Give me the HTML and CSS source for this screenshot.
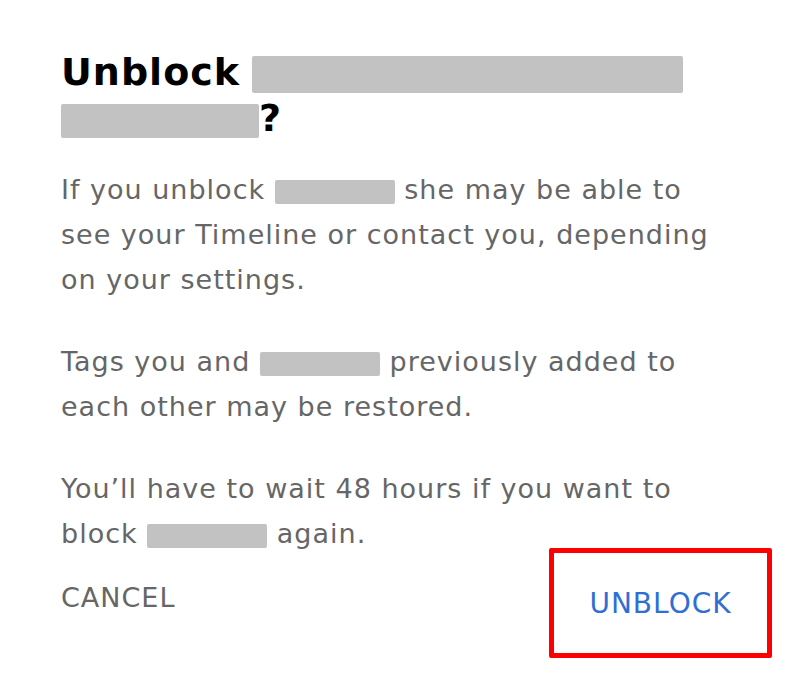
FILE: index.html
```html
<!DOCTYPE html>
<html lang="en">
<head>
    <meta charset="UTF-8">
    <meta name="viewport" content="width=device-width, initial-scale=1.0">
    <title>Unblock</title>
    <link rel="stylesheet" href="styles.css">
</head>
<body>
    <div class="dialog">
        <h2 class="dialog-title">Unblock <span class="redacted name-long"></span><br><span class="redacted name-title"></span>?</h2>

        <p class="dialog-text">If you unblock <span class="redacted name-short"></span> she may be able to<br>see your Timeline or contact you, depending<br>on your settings.</p>

        <p class="dialog-text">Tags you and <span class="redacted name-short"></span> previously added to<br>each other may be restored.</p>

        <p class="dialog-text">You’ll have to wait 48 hours if you want to<br>block <span class="redacted name-short"></span> again.</p>

        <div class="dialog-actions">
            <button type="button" class="btn btn-cancel">CANCEL</button>
            <div class="highlight">
                <button type="button" class="btn btn-unblock">UNBLOCK</button>
            </div>
        </div>
    </div>
</body>
</html>
```

FILE: styles.css
```css
body {
    margin: 0;
    padding: 0;
    background: #ffffff;
    font-family: "DejaVu Sans", "Noto Sans", Arial, sans-serif;
}

.dialog {
    padding: 49px 19px 0 61px;
}

.dialog-title {
    margin: 0 0 26px 0;
    font-size: 38px;
    line-height: 46px;
    letter-spacing: 1px;
    font-weight: bold;
    color: #000000;
}

.redacted {
    display: inline-block;
    background: #c2c2c2;
    border-radius: 2px;
    vertical-align: middle;
}

.name-long {
    width: 431px;
    height: 37px;
    margin-left: -2px;
}

.name-title {
    width: 198px;
    height: 34px;
}

.name-short {
    width: 120px;
    height: 24px;
}

.dialog-text {
    margin: 0 0 37px 0;
    font-size: 27px;
    line-height: 45px;
    letter-spacing: 1px;
    color: #666666;
}

.dialog-actions {
    display: flex;
    justify-content: space-between;
    align-items: center;
    margin-top: -45px;
}

.btn {
    background: none;
    border: none;
    padding: 0;
    font-family: "DejaVu Sans", "Noto Sans", Arial, sans-serif;
    font-size: 27px;
    letter-spacing: 1px;
    cursor: pointer;
}

.btn-cancel {
    color: #666666;
    margin-top: -12px;
}

.btn-unblock {
    color: #2f6fd3;
    font-size: 28px;
}

.highlight {
    width: 213px;
    height: 100px;
    border: 5px solid #ff0000;
    border-radius: 2px;
    display: flex;
    justify-content: center;
    align-items: center;
}
```
